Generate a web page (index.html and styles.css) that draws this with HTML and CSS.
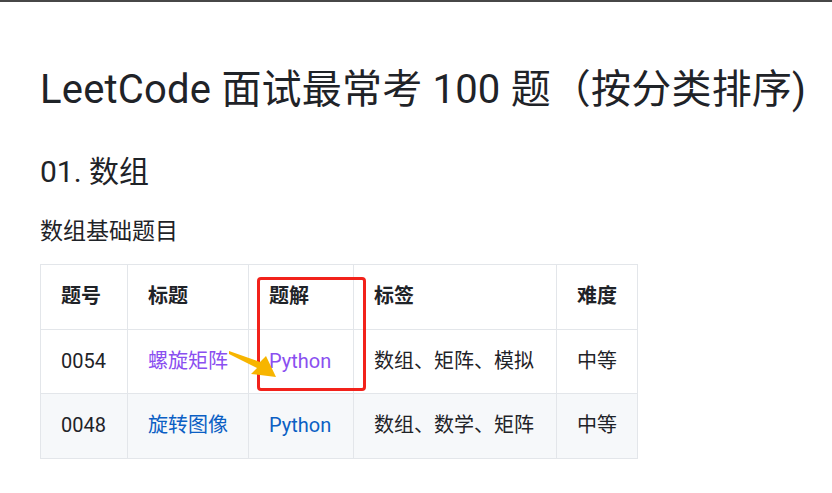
FILE: index.html
```html
<!DOCTYPE html>
<html lang="zh-CN">
<head>
    <meta charset="UTF-8">
    <meta name="viewport" content="width=device-width, initial-scale=1.0">
    <title>LeetCode 面试最常考 100 题</title>
    <link rel="stylesheet" href="styles.css">
</head>
<body>
    <div class="topbar"></div>
    <div class="content">
        <h1>LeetCode 面试最常考 100 题（按分类排序)</h1>
        <h2>01. 数组</h2>
        <p class="sub">数组基础题目</p>

        <table class="problems">
            <colgroup>
                <col class="c-no">
                <col class="c-title">
                <col class="c-sol">
                <col class="c-tags">
                <col class="c-level">
            </colgroup>
            <thead>
                <tr>
                    <th>题号</th>
                    <th>标题</th>
                    <th>题解</th>
                    <th>标签</th>
                    <th class="center">难度</th>
                </tr>
            </thead>
            <tbody>
                <tr>
                    <td>0054</td>
                    <td><a class="visited" href="#">螺旋矩阵</a></td>
                    <td><a class="visited" href="#">Python</a></td>
                    <td>数组、矩阵、模拟</td>
                    <td class="center">中等</td>
                </tr>
                <tr class="alt">
                    <td>0048</td>
                    <td><a href="#">旋转图像</a></td>
                    <td><a href="#">Python</a></td>
                    <td>数组、数学、矩阵</td>
                    <td class="center">中等</td>
                </tr>
            </tbody>
        </table>

        <p class="sub next">数组排序题目</p>
    </div>

    <!-- annotation drawn over the screenshot -->
    <div class="mark-box"></div>
    <svg class="mark-arrow" width="832" height="493" viewBox="0 0 832 493">
        <polygon points="229,351 260,362 266,356 276,377 251,374 257,368 229,354" fill="#f7b500"/>
    </svg>
</body>
</html>
```

FILE: styles.css
```css
html, body {
    margin: 0;
    padding: 0;
    background: #fff;
}
body {
    position: relative;
    height: 493px;
    overflow: hidden;
    font-family: Roboto, "Noto Sans CJK SC", sans-serif;
    color: #1f2328;
}
.topbar {
    height: 2px;
    background: #474747;
}
.content {
    padding-left: 40px;
}
h1 {
    margin: 64px 0 0;
    font-size: 40px;
    line-height: 48px;
    font-weight: 400;
    letter-spacing: 0.2px;
}
h2 {
    margin: 40px 0 0;
    font-size: 30px;
    line-height: 36px;
    font-weight: 400;
}
.sub {
    margin: 26px 0 0;
    font-size: 23px;
    line-height: 32px;
}
.sub.next {
    margin-top: 31px;
}
.problems {
    margin-top: 16px;
    border-collapse: collapse;
    table-layout: fixed;
    font-size: 20px;
    line-height: 23.5px;
}
.c-no { width: 87px; }
.c-title { width: 121px; }
.c-sol { width: 105px; }
.c-tags { width: 203px; }
.c-level { width: 80px; }
.problems th,
.problems td {
    border: 1px solid #e3e6ea;
    padding: 20px 20px;
    text-align: left;
    white-space: nowrap;
}
.problems th {
    font-weight: 700;
}
.problems .center {
    text-align: center;
}
.problems tr.alt {
    background: #f6f8fa;
}
.problems a {
    color: #0b5fc4;
    text-decoration: none;
}
.problems a.visited {
    color: #8a4ff0;
}
.mark-box {
    position: absolute;
    left: 257px;
    top: 277px;
    width: 103px;
    height: 108px;
    border: 3px solid #f2221b;
    border-radius: 4px;
}
.mark-arrow {
    position: absolute;
    left: 0;
    top: 0;
    pointer-events: none;
}
```
